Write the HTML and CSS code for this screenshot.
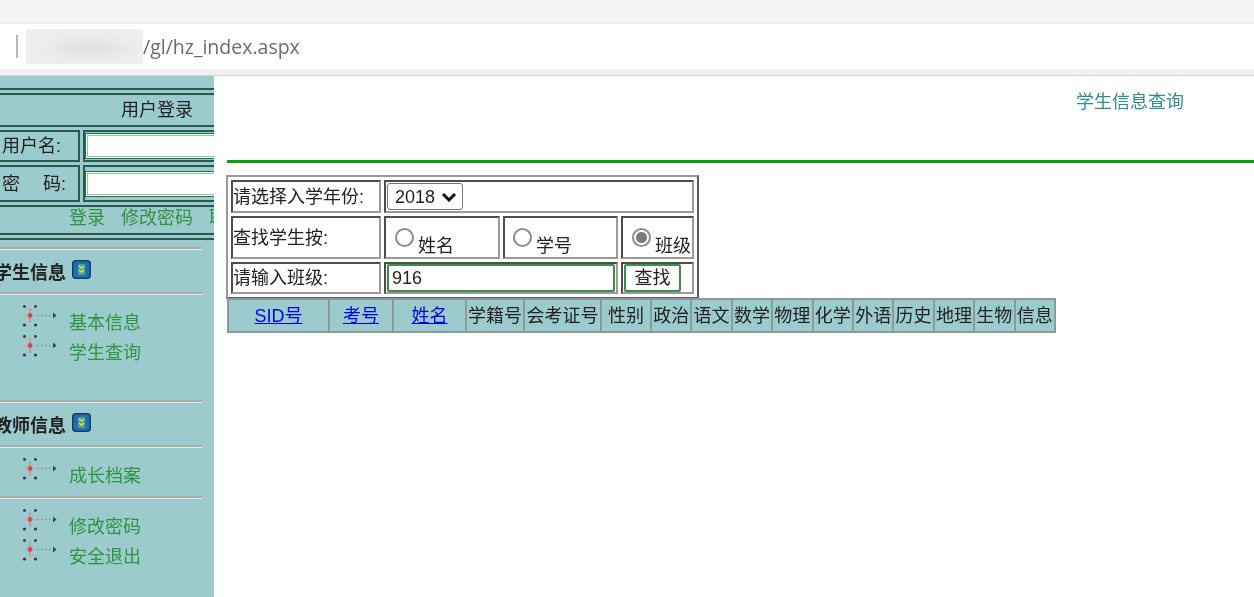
FILE: index.html
```html
<!DOCTYPE html>
<html lang="zh-CN">
<head>
    <meta charset="UTF-8">
    <meta name="viewport" content="width=device-width, initial-scale=1.0">
    <title>学生信息查询</title>
    <link rel="stylesheet" href="styles.css">
</head>
<body>
    <svg class="defs" width="0" height="0" aria-hidden="true">
        <symbol id="nav-icon" viewBox="0 0 36 24">
            <circle cx="2.5" cy="2.5" r="1.4" fill="#3a3a3a"/>
            <circle cx="13.5" cy="2.5" r="1.4" fill="#3a3a3a"/>
            <circle cx="2.5" cy="21" r="1.6" fill="#3a3a3a"/>
            <circle cx="13.5" cy="21" r="1.6" fill="#3a3a3a"/>
            <path d="M8 4V19" stroke="#d9706f" stroke-width="1"/>
            <path d="M2 11.5H14" stroke="#d3b0b0" stroke-width="1.4"/>
            <circle cx="8" cy="11.5" r="2.4" fill="#e0454a"/>
            <path d="M15 11.5H31" stroke="#8aa3a3" stroke-width="1.6" stroke-dasharray="2 2"/>
            <path d="M31 8.5L34.5 11.5L31 14.5Z" fill="#444"/>
        </symbol>
        <symbol id="head-icon" viewBox="0 0 19 19">
            <rect x="0.75" y="0.75" width="17.5" height="17.5" rx="3" fill="#1b70b4" stroke="#173f5f" stroke-width="1.5"/>
            <rect x="6" y="4" width="7" height="11" fill="#5d9f86"/>
            <path d="M7 6L9.5 8L12 6M7 10L9.5 12L12 10" fill="none" stroke="#c8e85a" stroke-width="1.6"/>
        </symbol>
    </svg>

    <div class="browser-top"></div>
    <div class="address-bar">
        <span class="address-sep"></span>
        <span class="address-blur"></span>
        <span class="address-text">/gl/hz_index.aspx</span>
    </div>
    <div class="browser-strip"></div>

    <div class="page">
        <aside class="sidebar">
            <table class="login">
                <colgroup>
                    <col class="login-c1"><col>
                </colgroup>
                <tr class="login-row-head"><td colspan="2">用户登录</td></tr>
                <tr class="login-row-user">
                    <td class="login-label">用户名:</td>
                    <td class="login-field"><input type="text" class="login-input"></td>
                </tr>
                <tr class="login-row-pass">
                    <td class="login-label">密　 码:</td>
                    <td class="login-field"><input type="password" class="login-input"></td>
                </tr>
                <tr class="login-row-links">
                    <td colspan="2" class="login-links"><a href="#">登录</a><a href="#">修改密码</a><a href="#">取消</a></td>
                </tr>
            </table>

            <hr class="rule rule-first">
            <div class="side-head">学生信息 <svg class="head-icon"><use href="#head-icon"/></svg></div>
            <hr class="rule">
            <ul class="side-nav">
                <li><svg class="nav-icon"><use href="#nav-icon"/></svg><a href="#">基本信息</a></li>
                <li><svg class="nav-icon"><use href="#nav-icon"/></svg><a href="#">学生查询</a></li>
            </ul>

            <hr class="rule rule-group">
            <div class="side-head">教师信息 <svg class="head-icon"><use href="#head-icon"/></svg></div>
            <hr class="rule">
            <ul class="side-nav">
                <li><svg class="nav-icon"><use href="#nav-icon"/></svg><a href="#">成长档案</a></li>
            </ul>

            <hr class="rule rule-small">
            <ul class="side-nav">
                <li><svg class="nav-icon"><use href="#nav-icon"/></svg><a href="#">修改密码</a></li>
                <li><svg class="nav-icon"><use href="#nav-icon"/></svg><a href="#">安全退出</a></li>
            </ul>
        </aside>

        <main class="content">
            <div class="page-title">学生信息查询</div>
            <hr class="title-line">

            <table class="search">
                <colgroup>
                    <col class="search-c1"><col class="search-c2"><col class="search-c3"><col class="search-c4">
                </colgroup>
                <tr class="search-r1">
                    <td>请选择入学年份:</td>
                    <td colspan="3">
                        <span class="year-wrap">
                            <select class="year">
                                <option>2018</option>
                            </select>
                            <svg class="year-arrow" viewBox="0 0 16 10"><path d="M2 2L8 8L14 2" fill="none" stroke="#111" stroke-width="3"/></svg>
                        </span>
                    </td>
                </tr>
                <tr class="search-r2">
                    <td>查找学生按:</td>
                    <td class="radio-cell"><label><input type="radio" name="by" class="radio">姓名</label></td>
                    <td class="radio-cell"><label class="radio-tight"><input type="radio" name="by" class="radio">学号</label></td>
                    <td class="radio-cell"><label><input type="radio" name="by" class="radio" checked>班级</label></td>
                </tr>
                <tr class="search-r3">
                    <td>请输入班级:</td>
                    <td colspan="2"><input type="text" class="keyword" value="916"></td>
                    <td><button type="button" class="find">查找</button></td>
                </tr>
            </table>

            <table class="results">
                <colgroup>
                    <col class="w-sid"><col class="w-kh"><col class="w-xm"><col class="w-xj"><col class="w-hk"><col class="w-xb">
                    <col class="w-sub"><col class="w-sub"><col class="w-sub"><col class="w-sub"><col class="w-sub">
                    <col class="w-sub"><col class="w-sub"><col class="w-sub"><col class="w-sub"><col class="w-sub">
                </colgroup>
                <tr>
                    <th><a href="#">SID号</a></th>
                    <th><a href="#">考号</a></th>
                    <th><a href="#">姓名</a></th>
                    <th>学籍号</th>
                    <th>会考证号</th>
                    <th>性别</th>
                    <th>政治</th>
                    <th>语文</th>
                    <th>数学</th>
                    <th>物理</th>
                    <th>化学</th>
                    <th>外语</th>
                    <th>历史</th>
                    <th>地理</th>
                    <th>生物</th>
                    <th>信息</th>
                </tr>
            </table>
        </main>
    </div>
</body>
</html>
```

FILE: styles.css
```css
html, body {
    margin: 0;
    height: 597px;
    overflow: hidden;
    background-color: #fff;
}
body {
    font-family: "Liberation Sans", "Noto Sans CJK SC", sans-serif;
    font-size: 18px;
    line-height: 22px;
    color: #222;
    filter: blur(0.45px);
}
.defs {
    position: absolute;
}

/* browser chrome */
.browser-top {
    height: 23px;
    background-color: #f4f4f4;
    border-bottom: 1px solid #ececec;
}
.address-bar {
    display: flex;
    align-items: center;
    height: 45px;
    background-color: #fff;
}
.address-sep {
    width: 2px;
    height: 23px;
    margin-left: 16px;
    background-color: #b9b9b9;
}
.address-blur {
    width: 117px;
    height: 35px;
    margin-left: 8px;
    background: radial-gradient(ellipse at 55% 55%, #dedede 0, #ececec 45%, #f1f1f1 100%);
}
.address-text {
    font-family: "Open Sans", sans-serif;
    font-size: 19.5px;
    color: #6b6b6b;
}
.browser-strip {
    height: 6px;
    background-color: #f1f1f1;
    border-bottom: 1px solid #d6d6d6;
}

.page {
    display: flex;
    height: 521px;
}

/* left column */
.sidebar {
    flex: 0 0 214px;
    overflow: hidden;
    padding-top: 12px;
    box-sizing: border-box;
    background-color: #9ccbcd;
}
.login {
    width: 354px;
    margin-left: -20px;
    border: 2px solid #2b5a50;
    border-spacing: 3px;
    table-layout: fixed;
}
.login-c1 {
    width: 95px;
}
.login td {
    padding: 0;
    border: 2px solid #2b5a50;
    text-align: center;
    white-space: nowrap;
}
.login-row-head td { height: 30px; }
.login-row-user td { height: 28px; }
.login-row-pass td { height: 33px; }
.login-row-links td { height: 26px; }
.login .login-label {
    text-align: left;
    padding-left: 15px;
}
.login .login-field {
    text-align: left;
}
.login-input {
    display: block;
    width: 100%;
    height: 26px;
    padding: 0;
    margin: 1px 0;
    box-sizing: border-box;
    background-color: #fff;
    border: 1px solid #1c7a34;
    outline: 1px solid #8fc7a0;
    outline-offset: -3px;
    box-shadow: inset 0 0 0 2px #fff;
}
.login-links {
    vertical-align: top;
}
.login-links a {
    margin: 0 8px;
    color: #2f9440;
    text-decoration: none;
}
.rule {
    height: 0;
    width: 202px;
    margin: 0;
    border: 0;
    border-top: 2px solid #a9adad;
    border-bottom: 1px solid #e4eeee;
}
.rule-first {
    margin-top: 7px;
}
.rule-group {
    margin-top: 36px;
}
.rule-small {
    margin-top: 9px;
}
.side-head {
    display: flex;
    align-items: center;
    height: 42px;
    padding-top: 4px;
    box-sizing: border-box;
    margin-left: -6px;
    font-weight: bold;
    white-space: nowrap;
}
.head-icon {
    width: 19px;
    height: 19px;
    margin-left: 6px;
    margin-top: -8px;
}
.side-nav {
    list-style: none;
    margin: 0;
    padding: 9px 0 0 22px;
}
.side-nav li {
    display: flex;
    height: 30px;
}
.side-nav a {
    margin: 8px 0 0 11px;
    color: #2f9440;
    text-decoration: none;
}
.nav-icon {
    width: 36px;
    height: 24px;
}

/* right column */
.content {
    flex: 1;
    min-width: 0;
    padding-left: 13px;
}
.page-title {
    height: 84px;
    padding: 15px 70px 0 0;
    box-sizing: border-box;
    text-align: right;
    color: #2b8f92;
}
.title-line {
    height: 3px;
    margin: 0;
    border: 0;
    background-color: #0b9e12;
}
.search {
    width: 473px;
    margin: 12px 0 -1px -1px;
    table-layout: fixed;
    border-spacing: 3px;
    border-style: solid;
    border-width: 2px;
    border-color: #9a9a9a #5c5c5c #5c5c5c #9a9a9a;
}
.search-c1 { width: 150px; }
.search-c2 { width: 116px; }
.search-c3 { width: 115px; }
.search-c4 { width: 73px; }
.search td {
    padding: 0;
    border-style: solid;
    border-width: 2px;
    border-color: #4d4d4d #9a9a9a #9a9a9a #4d4d4d;
    white-space: nowrap;
}
.search-r1 td { height: 29px; }
.search-r2 td { height: 39px; }
.search-r3 td { height: 28px; }
.radio-cell {
    vertical-align: bottom;
}
.radio-cell label {
    display: block;
    padding-left: 9px;
}
.radio-cell .radio-tight {
    padding-left: 8px;
}
.radio {
    appearance: none;
    width: 19px;
    height: 19px;
    margin: 0 4px 0 0;
    border: 2px solid #8e8e8e;
    border-radius: 50%;
    background-color: #fff;
    vertical-align: 5px;
}
.radio:checked {
    background: radial-gradient(circle, #7c7c7c 0, #7c7c7c 5px, #fff 6px);
}
.year-wrap {
    position: relative;
    display: inline-block;
    margin-left: 1px;
    vertical-align: middle;
}
.year {
    display: block;
    appearance: none;
    height: 27px;
    width: 76px;
    padding: 0 0 0 7px;
    font: inherit;
    color: #222;
    background-color: #fff;
    border: 1px solid #767676;
    border-radius: 3px;
}
.year-arrow {
    position: absolute;
    left: 54px;
    top: 9px;
    width: 16px;
    height: 10px;
    pointer-events: none;
}
.keyword {
    display: block;
    width: 228px;
    height: 28px;
    padding: 0 3px;
    margin-left: 1px;
    box-sizing: border-box;
    font: inherit;
    color: #222;
    border: 2px solid #3d8c4c;
    border-radius: 2px;
}
.find {
    display: block;
    width: 57px;
    height: 28px;
    padding: 0;
    margin-left: 1px;
    font: inherit;
    color: #222;
    background-color: #fdfdfd;
    border: 2px solid #3d8c4c;
    border-radius: 2px;
}
.results {
    width: 827px;
    table-layout: fixed;
    border-collapse: collapse;
    background-color: #9ccbcd;
}
.w-sid { width: 101px; }
.w-kh { width: 64px; }
.w-xm { width: 73px; }
.w-xj { width: 58px; }
.w-hk { width: 77px; }
.w-xb { width: 50px; }
.w-sub { width: 40.4px; }
.results th {
    height: 31px;
    padding: 0;
    border: 2px solid #8b9a9b;
    font-weight: normal;
    white-space: nowrap;
}
.results a {
    color: #0000ee;
}
```
